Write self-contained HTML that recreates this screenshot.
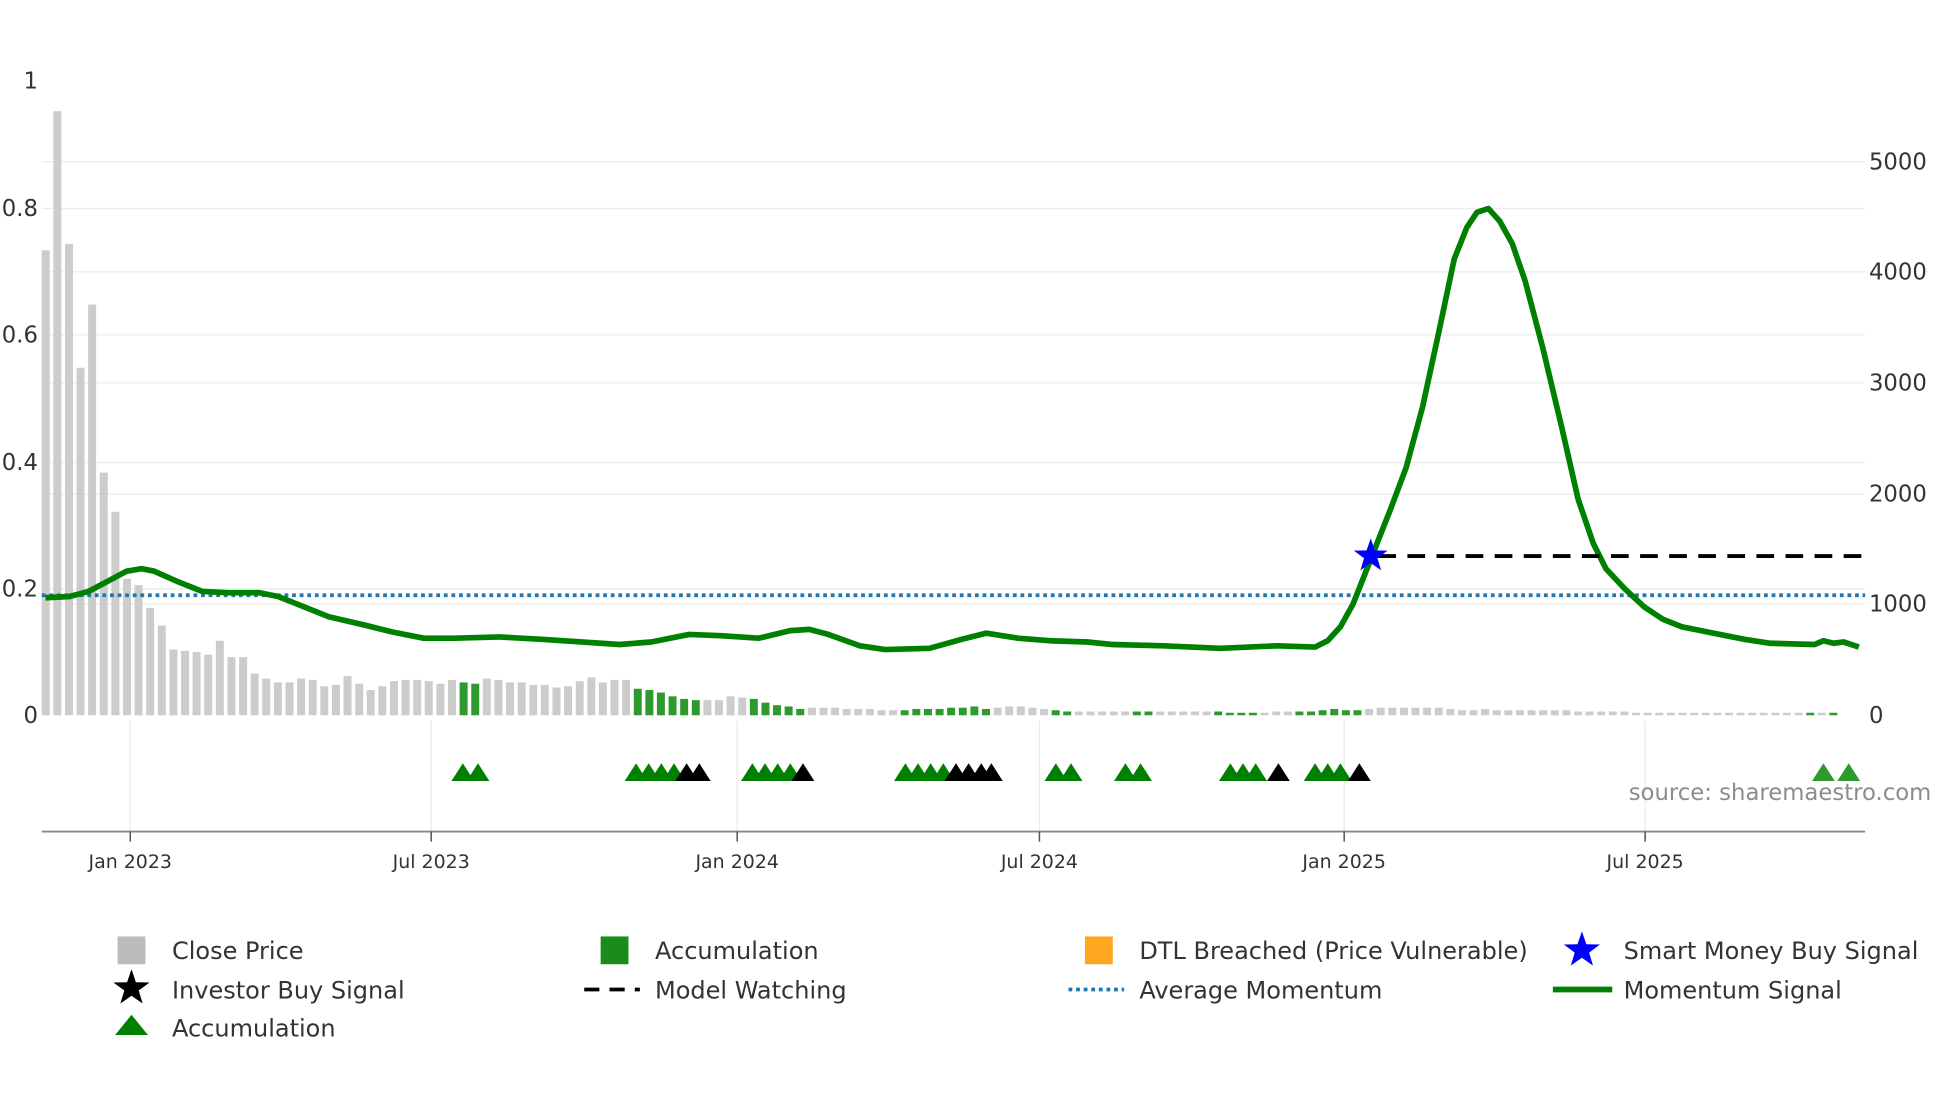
<!DOCTYPE html>
<html><head><meta charset="utf-8"><style>
html,body{margin:0;padding:0;background:#fff;width:1960px;height:1102px;overflow:hidden}
svg text{font-family:"DejaVu Sans","Liberation Sans",sans-serif}
</style></head><body>
<svg id="c" width="1960" height="1102" viewBox="0 0 1550 872" preserveAspectRatio="none" xmlns="http://www.w3.org/2000/svg">
<g stroke="#ebebeb" stroke-width="1">
<line x1="33" x2="1475" y1="128" y2="128"/><line x1="33" x2="1475" y1="165" y2="165"/>
<line x1="33" x2="1475" y1="215" y2="215"/><line x1="33" x2="1475" y1="265" y2="265"/>
<line x1="33" x2="1475" y1="303" y2="303"/><line x1="33" x2="1475" y1="366" y2="366"/>
<line x1="33" x2="1475" y1="391" y2="391"/><line x1="33" x2="1475" y1="466" y2="466"/>
<line x1="33" x2="1475" y1="478" y2="478"/>
<line x1="103" x2="103" y1="570" y2="658"/><line x1="341" x2="341" y1="570" y2="658"/>
<line x1="583" x2="583" y1="570" y2="658"/><line x1="822" x2="822" y1="570" y2="658"/>
<line x1="1063" x2="1063" y1="570" y2="658"/><line x1="1301" x2="1301" y1="570" y2="658"/>
</g>
<g id="bars"></g>
<line x1="33" x2="1475" y1="471" y2="471" stroke="#1f77b4" stroke-width="3" stroke-dasharray="3,3"/>
<polyline id="mom" fill="none" stroke="#008000" stroke-width="4.5" stroke-linejoin="round" points="36,473 55,472 70,468 85,460 100,452 112,450 122,452 140,460 160,468 180,469 205,469 220,472 240,480 260,488 290,495 310,500 335,505 360,505 395,504 430,506 490,510 515,508 545,502 570,503 600,505 625,499 640,498 655,502 680,511 700,514 735,513 760,506 780,501 805,505 830,507 860,508 880,510 920,511 965,513 1010,511 1040,512 1050,507 1060,496 1070,478 1085,440 1100,402 1112,370 1125,322 1138,262 1150,205 1160,180 1168,168 1177,165 1186,175 1196,193 1206,222 1220,275 1235,338 1248,395 1260,430 1270,450 1285,466 1300,480 1315,490 1330,496 1360,502 1380,506 1400,509 1435,510 1442,507 1450,509 1458,508 1470,512"/>
<line x1="1090" x2="1475" y1="440" y2="440" stroke="#000" stroke-width="3" stroke-dasharray="14,9"/>
<polygon transform="translate(1084,440)" fill="#0000ff" points="0,-14 3.3,-4.5 13.3,-4.3 5.3,1.7 8.2,11.3 0,5.5 -8.2,11.3 -5.3,1.7 -13.3,-4.3 -3.3,-4.5"/>
<g id="tri"></g>
<line x1="33" x2="1475" y1="658" y2="658" stroke="#888" stroke-width="1.5"/>
<g stroke="#555" stroke-width="1.2">
<line x1="103" x2="103" y1="658" y2="666"/><line x1="341" x2="341" y1="658" y2="666"/>
<line x1="583" x2="583" y1="658" y2="666"/><line x1="822" x2="822" y1="658" y2="666"/>
<line x1="1063" x2="1063" y1="658" y2="666"/><line x1="1301" x2="1301" y1="658" y2="666"/>
</g>
<g font-size="15" fill="#333" text-anchor="middle">
<text x="103" y="687">Jan 2023</text><text x="341" y="687">Jul 2023</text>
<text x="583" y="687">Jan 2024</text><text x="822" y="687">Jul 2024</text>
<text x="1063" y="687">Jan 2025</text><text x="1301" y="687">Jul 2025</text>
</g>
<g font-size="18" fill="#333" text-anchor="end">
<text x="30" y="70">1</text><text x="30" y="171">0.8</text><text x="30" y="271">0.6</text>
<text x="30" y="372">0.4</text><text x="30" y="472">0.2</text><text x="30" y="572">0</text>
</g>
<g font-size="18" fill="#333">
<text x="1478" y="134">5000</text><text x="1478" y="221">4000</text><text x="1478" y="309">3000</text>
<text x="1478" y="397">2000</text><text x="1478" y="484">1000</text><text x="1478" y="572">0</text>
</g>
<text x="1288" y="633" font-size="18" fill="#8c8c8c">source: sharemaestro.com</text>
<g font-size="19" fill="#333">
<rect x="93" y="741" width="22" height="22" fill="#bbb"/><text x="136" y="759">Close Price</text>
<rect x="475" y="741" width="22" height="22" fill="#1a8c1a"/><text x="518" y="759">Accumulation</text>
<rect x="858" y="741" width="22" height="22" fill="#ffa51f"/><text x="901" y="759">DTL Breached (Price Vulnerable)</text>
<polygon transform="translate(1251,752)" fill="#0000ff" points="0,-15 3.5,-4.8 14.3,-4.6 5.7,1.8 8.8,12.1 0,5.9 -8.8,12.1 -5.7,1.8 -14.3,-4.6 -3.5,-4.8"/><text x="1284" y="759">Smart Money Buy Signal</text>
<polygon transform="translate(104,782)" fill="#000" points="0,-15 3.5,-4.8 14.3,-4.6 5.7,1.8 8.8,12.1 0,5.9 -8.8,12.1 -5.7,1.8 -14.3,-4.6 -3.5,-4.8"/><text x="136" y="790">Investor Buy Signal</text>
<line x1="462" x2="506" y1="783" y2="783" stroke="#000" stroke-width="3" stroke-dasharray="12,8"/><text x="518" y="790">Model Watching</text>
<line x1="845" x2="889" y1="783" y2="783" stroke="#1f77b4" stroke-width="3" stroke-dasharray="3,3"/><text x="901" y="790">Average Momentum</text>
<line x1="1228" x2="1275" y1="783" y2="783" stroke="#008000" stroke-width="4.5"/><text x="1284" y="790">Momentum Signal</text>
<polygon points="91,819 104,803 117,819" fill="#008000"/><text x="136" y="820">Accumulation</text>
</g>
</svg>
<script>
var NS="http://www.w3.org/2000/svg";
var tops=[198,88,193,291,241,374,405,458,463,481,495,514,515,516,518,507,520,520,533,537,540,540,537,538,543,542,535,541,546,543,539,538,538,539,541,538,540,541,537,538,540,540,542,542,544,543,539,536,540,538,538,545,546,548,551,553,554,554,554,551,552,553,556,558,559,561,560,560,560,561,561,561,562,562,562,561,561,561,560,560,559,561,560,559,559,560,561,562,563,563,563,563,563,563,563,563,563,563,563,563,563,563,564,564,564,564,563,563,563,563,562,561,562,562,561,560,560,560,560,560,560,561,562,562,561,562,562,562,562,562,562,562,563,563,563,563,563,564,564,564,564,564,564,564,564,564,564,564,564,564,564,564,564,564,564];
var green={36:1,37:1,51:1,52:1,53:1,54:1,55:1,56:1,61:1,62:1,63:1,64:1,65:1,74:1,75:1,76:1,77:1,78:1,79:1,80:1,81:1,87:1,88:1,94:1,95:1,101:1,102:1,103:1,104:1,108:1,109:1,110:1,111:1,112:1,113:1,152:1,154:1};
var g=document.getElementById("bars"),h="";
for(var i=0;i<tops.length;i++){var x=36+i*9.18;var t=tops[i];
h+='<rect x="'+(x-3).toFixed(1)+'" y="'+t+'" width="6.3" height="'+(566-t)+'" fill="'+(green[i]?'#2e9a2e':'#cccccc')+'"/>';}
g.innerHTML=h;
var tri=[[366,0],[378,0],[503,0],[513,0],[523,0],[533,0],[543,1],[553,1],[595,0],[605,0],[615,0],[625,0],[635,1],[716,0],[726,0],[736,0],[746,0],[756,1],[766,1],[776,1],[784,1],[835,0],[847,0],[890,0],[902,0],[973,0],[983,0],[993,0],[1011,1],[1040,0],[1050,0],[1060,0],[1075,1],[1442,2],[1462,2]];
var s="";tri.forEach(function(a){var c=a[1]==1?'#000':(a[1]==2?'#2e9a2e':'#008000');
s+='<polygon points="'+(a[0]-9)+',618 '+a[0]+',604 '+(a[0]+9)+',618" fill="'+c+'"/>';});
document.getElementById("tri").innerHTML=s;
</script>
</body></html>
